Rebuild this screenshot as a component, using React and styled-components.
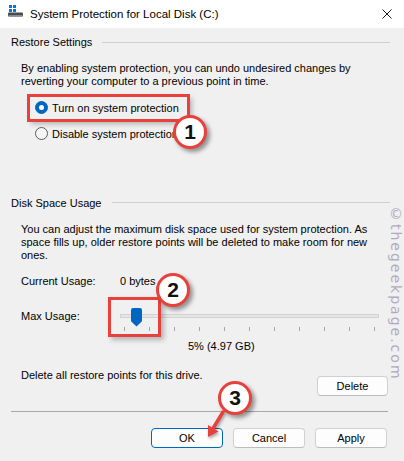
import React from "react";
import styled, { createGlobalStyle } from "styled-components";

const Global = createGlobalStyle`
  html, body { margin: 0; padding: 0; background: #f0f0f0; }
  body { font-family: "Liberation Sans", Arial, sans-serif; font-size: 11px; color: #000; }
  * { box-sizing: border-box; }
`;

const RED = "#e8413c";

const Window = styled.div`
  position: relative;
  width: 404px;
  height: 461px;
  overflow: hidden;
  background: #f0f0f0;
  display: flex;
  flex-direction: column;
`;

const TitleBar = styled.div`
  height: 28px;
  flex: none;
  background: #fff;
  display: flex;
  align-items: center;
  padding: 0 12px 0 8px;
`;

const TitleIcon = styled.svg`
  width: 15px;
  height: 12px;
  margin-bottom: 7px;
  flex: none;
`;

const TitleText = styled.div`
  margin-left: 7px;
  font-size: 11.5px;
  line-height: 14px;
  color: #000;
  white-space: nowrap;
`;

const CloseButton = styled.svg`
  margin-left: auto;
  width: 10px;
  height: 10px;
  flex: none;
`;

const Body = styled.div`
  flex: 1;
  display: flex;
  flex-direction: column;
  padding: 7px 14px 0 11px;
`;

const GroupHeader = styled.div`
  display: flex;
  align-items: center;
  gap: 10px;
  height: 14px;
  line-height: 14px;
  margin-top: ${(p) => p.$top || 0}px;
  white-space: nowrap;
`;

const Rule = styled.div`
  flex: 1;
  height: 1px;
  background: #cfcfcf;
`;

const Paragraph = styled.p`
  margin: 13px 0 0;
  padding-left: 10px;
  line-height: 13px;
  white-space: nowrap;
`;

const RadioList = styled.div`
  display: flex;
  flex-direction: column;
  gap: 4px;
  margin-top: 8.5px;
  padding-left: 19px;
`;

const RadioRow = styled.label`
  width: fit-content;
  height: 22px;
  display: flex;
  align-items: center;
  gap: 4px;
  padding: 0 8px 0 5px;
  box-shadow: ${(p) =>
    p.$highlight ? `0 0 0 3px ${RED}, 3px 3px 5px 2px rgba(0,0,0,0.25)` : "none"};
`;

const RadioDot = styled.span`
  width: 13px;
  height: 13px;
  border-radius: 50%;
  flex: none;
  display: flex;
  align-items: center;
  justify-content: center;
  background: ${(p) => (p.$checked ? "#0067c0" : "#f5f5f5")};
  border: 1px solid ${(p) => (p.$checked ? "#0067c0" : "#5c5c5c")};
  &::after {
    content: "";
    display: ${(p) => (p.$checked ? "block" : "none")};
    width: 5px;
    height: 5px;
    border-radius: 50%;
    background: #fff;
  }
`;

const InfoRow = styled.div`
  display: flex;
  align-items: flex-start;
  padding-left: 10px;
  margin-top: ${(p) => p.$top || 0}px;
  line-height: 13px;
`;

const Label = styled.div`
  width: 99px;
  flex: none;
  margin-top: ${(p) => p.$offset || 0}px;
  white-space: nowrap;
`;

const Slider = styled.div`
  position: relative;
  width: 259px;
  height: 24px;
`;

const Track = styled.div`
  margin-top: 6px;
  height: 4px;
  background: #e6e6e6;
  border: 1px solid #d2d2d2;
`;

const Ticks = styled.div`
  margin: 9px 0 0 4px;
  width: 251px;
  height: 4px;
  display: flex;
  justify-content: space-between;
`;

const Tick = styled.span`
  width: 1px;
  height: 4px;
  background: #a6a6a6;
`;

const Thumb = styled.div`
  position: absolute;
  left: 11px;
  top: 0;
  width: 11px;
  height: 19px;
  background: #0067c0;
  border-radius: 2px 2px 0 0;
  clip-path: polygon(0 0, 100% 0, 100% 72%, 50% 100%, 0 72%);
`;

const SliderValue = styled.div`
  margin-top: 8.5px;
  padding-left: 177px;
  line-height: 13px;
  white-space: nowrap;
`;

const DeleteRow = styled.div`
  display: flex;
  justify-content: space-between;
  align-items: flex-start;
  margin-top: 16px;
  padding-left: 10px;
  line-height: 13px;
`;

const Button = styled.button`
  width: ${(p) => p.$width || 72}px;
  height: 20px;
  margin-top: ${(p) => p.$top || 0}px;
  margin-right: ${(p) => p.$right || 0}px;
  padding: 0;
  font-family: "Liberation Sans", Arial, sans-serif;
  font-size: 11px;
  color: #000;
  background: #fdfdfd;
  border: 1px solid ${(p) => (p.$primary ? "#0067c0" : "#d0d0d0")};
  border-bottom-color: ${(p) => (p.$primary ? "#0067c0" : "#bdbdbd")};
  border-radius: 4px;
  flex: none;
`;

const Separator = styled.div`
  margin: 15px 2px 0 0;
  height: 1px;
  background: #a8a8a8;
`;

const ButtonRow = styled.div`
  display: flex;
  justify-content: flex-end;
  gap: 10px;
  margin: 16px 3px 0 0;
`;

/* annotation overlays */
const Badge = styled.div`
  position: absolute;
  left: ${(p) => p.$x - 17}px;
  top: ${(p) => p.$y - 17}px;
  width: 34px;
  height: 34px;
  border-radius: 50%;
  background: #fff;
  border: 3px solid ${RED};
  box-shadow: 3px 3px 4px rgba(0, 0, 0, 0.4);
  display: flex;
  align-items: center;
  justify-content: center;
  font-family: "Liberation Sans", Arial, sans-serif;
  font-weight: bold;
  font-size: 21px;
  color: #111;
`;

const HighlightBox = styled.div`
  position: absolute;
  left: 108px;
  top: 297px;
  width: 53px;
  height: 40px;
  border: 3px solid ${RED};
  box-shadow: 3px 3px 5px rgba(0, 0, 0, 0.25);
`;

const Arrow = styled.svg`
  position: absolute;
  left: 198px;
  top: 405px;
  width: 35px;
  height: 40px;
  overflow: visible;
  filter: drop-shadow(1px 2px 1.5px rgba(0, 0, 0, 0.35));
`;

const Watermark = styled.div`
  position: absolute;
  left: 389px;
  top: 206px;
  writing-mode: vertical-rl;
  font-family: "DejaVu Sans", sans-serif;
  font-size: 14px;
  line-height: 14px;
  letter-spacing: 2px;
  color: rgba(160, 148, 180, 0.8);
  white-space: nowrap;
`;

export default function App() {
  return (
    <>
      <Global />
      <Window>
        <TitleBar>
          <TitleIcon viewBox="0 0 15 12">
            <rect x="1" y="0" width="3" height="3" fill="#0078d4" />
            <rect x="5" y="0" width="3" height="3" fill="#0078d4" />
            <rect x="1" y="4" width="3" height="3" fill="#0078d4" />
            <rect x="5" y="4" width="3" height="3" fill="#0078d4" />
            <rect x="0" y="7.5" width="15" height="4" rx="1" fill="#4a4a4a" />
            <rect x="0.5" y="10" width="14" height="1.5" fill="#8a8a8a" />
          </TitleIcon>
          <TitleText>System Protection for Local Disk (C:)</TitleText>
          <CloseButton viewBox="0 0 10 10">
            <path d="M0.5 0.5 L9.5 9.5 M9.5 0.5 L0.5 9.5" stroke="#1a1a1a" strokeWidth="1" />
          </CloseButton>
        </TitleBar>
        <Body>
          <GroupHeader>
            <span>Restore Settings</span>
            <Rule />
          </GroupHeader>
          <Paragraph>
            By enabling system protection, you can undo undesired changes by
            <br />
            reverting your computer to a previous point in time.
          </Paragraph>
          <RadioList>
            <RadioRow $highlight>
              <RadioDot $checked />
              Turn on system protection
            </RadioRow>
            <RadioRow>
              <RadioDot />
              Disable system protection
            </RadioRow>
          </RadioList>
          <GroupHeader $top={51}>
            <span>Disk Space Usage</span>
            <Rule />
          </GroupHeader>
          <Paragraph>
            You can adjust the maximum disk space used for system protection. As
            <br />
            space fills up, older restore points will be deleted to make room for new
            <br />
            ones.
          </Paragraph>
          <InfoRow $top={13.5}>
            <Label>Current Usage:</Label>
            <span>0 bytes</span>
          </InfoRow>
          <InfoRow $top={19.5}>
            <Label $offset={2.5}>Max Usage:</Label>
            <Slider>
              <Track />
              <Ticks>
                {Array.from({ length: 11 }).map((_, i) => (
                  <Tick key={i} />
                ))}
              </Ticks>
              <Thumb />
            </Slider>
          </InfoRow>
          <SliderValue>5% (4.97 GB)</SliderValue>
          <DeleteRow>
            <span>Delete all restore points for this drive.</span>
            <Button $width={71} $top={6.5} $right={2}>
              Delete
            </Button>
          </DeleteRow>
          <Separator />
          <ButtonRow>
            <Button $primary>OK</Button>
            <Button>Cancel</Button>
            <Button>Apply</Button>
          </ButtonRow>
        </Body>

        <HighlightBox />
        <Badge $x={190} $y={132}>1</Badge>
        <Badge $x={173} $y={290}>2</Badge>
        <Badge $x={235} $y={398}>3</Badge>
        <Arrow viewBox="0 0 35 40">
          <line x1="25" y1="7" x2="15" y2="23.5" stroke={RED} strokeWidth="3.5" strokeLinecap="round" />
          <polygon points="10,32 20.5,26.5 10,20" fill={RED} />
        </Arrow>
        <Watermark>©thegeekpage.com</Watermark>
      </Window>
    </>
  );
}
